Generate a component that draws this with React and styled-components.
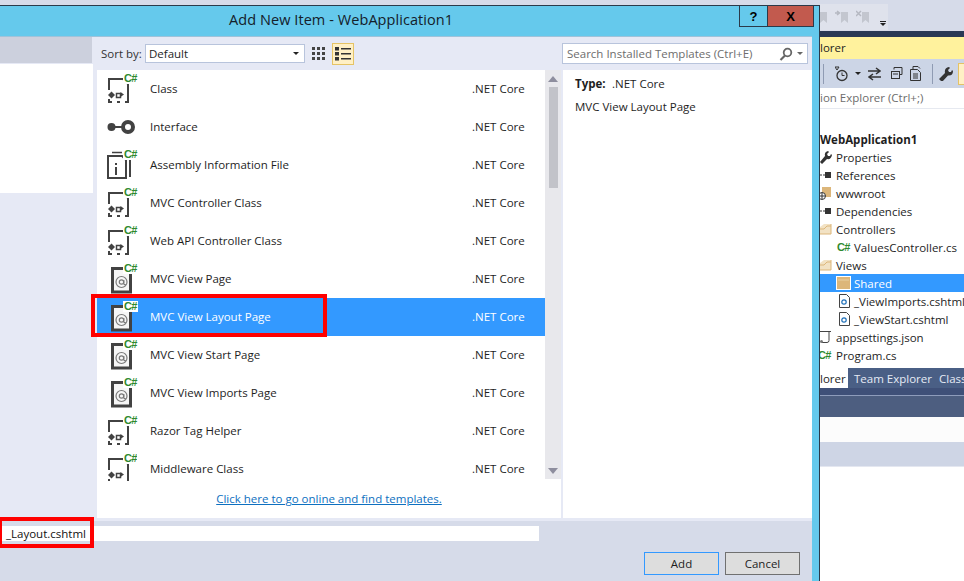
import React from 'react';
import styled, { createGlobalStyle } from 'styled-components';

const GlobalStyle = createGlobalStyle`
  html, body { margin: 0; padding: 0; background: #d6dbe9; }
  body { font-family: "Open Sans", "Noto Sans", "Liberation Sans", sans-serif; font-size: 11.5px; color: #1e1e1e; }
  * { box-sizing: border-box; }
`;

const templates = [
  { name: 'Class', icon: 'class' },
  { name: 'Interface', icon: 'interface' },
  { name: 'Assembly Information File', icon: 'info' },
  { name: 'MVC Controller Class', icon: 'class' },
  { name: 'Web API Controller Class', icon: 'class' },
  { name: 'MVC View Page', icon: 'razor' },
  { name: 'MVC View Layout Page', icon: 'razor', selected: true },
  { name: 'MVC View Start Page', icon: 'razor' },
  { name: 'MVC View Imports Page', icon: 'razor' },
  { name: 'Razor Tag Helper', icon: 'class' },
  { name: 'Middleware Class', icon: 'class' },
];

const treeRows = [
  { label: 'WebApplication1', bold: true },
  { label: 'Properties', icon: 'wrench' },
  { label: 'References', icon: 'refs' },
  { label: 'wwwroot', icon: 'globe' },
  { label: 'Dependencies', icon: 'refs' },
  { label: 'Controllers', icon: 'folder' },
  { label: 'ValuesController.cs', icon: 'cs', nested: true },
  { label: 'Views', icon: 'folder' },
  { label: 'Shared', icon: 'openFolder', nested: true, selected: true },
  { label: '_ViewImports.cshtml', icon: 'page', nested: true },
  { label: '_ViewStart.cshtml', icon: 'page', nested: true },
  { label: 'appsettings.json', icon: 'json' },
  { label: 'Program.cs', icon: 'cs' },
];

const Page = styled.div`
  width: 964px;
  height: 581px;
  display: flex;
  overflow: hidden;
  background: #d6dbe9;
`;

const Dialog = styled.div`
  position: relative;
  width: 820px;
  height: 576px;
  margin-top: 5px;
  display: flex;
  flex-direction: column;
  background: #65c9ec;
  border-top: 1px solid #2b3a4a;
  border-right: 1px solid #2b3a4a;
`;

const TitleBar = styled.div`
  height: 30px;
  padding: 4px 0 0 229px;
  font-size: 14.5px;
  letter-spacing: 0.07px;
  line-height: 20px;
  color: #14202a;
`;

const WindowButtons = styled.div`
  position: absolute;
  top: 0;
  left: 739px;
  display: flex;
  height: 21px;
  border: 1px solid #2b3a4a;
  border-top: 0;
`;

const WindowButton = styled.div`
  width: ${p => p.$w}px;
  display: flex;
  align-items: center;
  justify-content: center;
  background: ${p => p.$bg};
  font: bold 13px "Liberation Sans", sans-serif;
  color: #000;
  & + & { border-left: 1px solid #2b3a4a; }
`;

const DialogBody = styled.div`
  flex: 1;
  margin-right: 7px;
  display: flex;
  flex-direction: column;
  background: #e6e9f5;
  border-top: 1px solid #9fc3da;
`;

const Main = styled.div`
  height: 481px;
  display: grid;
  grid-template-columns: 97px 466px 249px;
  grid-template-rows: 33px 1fr;
`;

const LeftColumn = styled.div`
  grid-row: 1 / 3;
`;

const LeftHeader = styled.div`
  width: 92px;
  height: 26px;
  background: #ccd0dd;
`;

const LeftTree = styled.div`
  width: 93px;
  height: 129px;
  margin-top: 1px;
  background: #fff;
`;

const Toolbar = styled.div`
  display: flex;
  align-items: center;
  padding: 0 0 0 4px;
`;

const SortLabel = styled.span`
  width: 44px;
  color: #333;
`;

const SelectBox = styled.div`
  width: 160px;
  height: 19px;
  padding: 0 3px;
  display: flex;
  align-items: center;
  justify-content: space-between;
  background: #fff;
  border: 1px solid #b8c4dc;
  line-height: 17px;
`;

const Caret = styled.span`
  width: 0;
  height: 0;
  margin: ${p => p.$margin || '0 2px'};
  border-left: 3px solid transparent;
  border-right: 3px solid transparent;
  border-top: 3px solid ${p => p.$color || '#222'};
`;

const ViewButton = styled.div`
  width: 22px;
  height: 22px;
  margin-left: ${p => p.$gap}px;
  display: flex;
  align-items: center;
  justify-content: center;
  background: ${p => (p.$active ? '#fff0c5' : 'transparent')};
  border: 1px solid ${p => (p.$active ? '#e5c365' : 'transparent')};
`;

const SearchCell = styled.div`
  padding: 0 4px 0 0;
  margin-left: -1px;
  display: flex;
  align-items: center;
`;

const SearchBox = styled.div`
  width: 246px;
  height: 21px;
  padding: 0 4px;
  display: flex;
  align-items: center;
  justify-content: space-between;
  background: #fff;
  border: 1px solid #b8c4dc;
  color: #6d6d6d;
`;

const SearchTools = styled.div`
  display: flex;
  align-items: center;
  gap: 4px;
`;

const CenterPane = styled.div`
  display: flex;
  flex-direction: column;
  min-height: 0;
`;

const ListArea = styled.div`
  height: 409px;
  width: 464px;
  display: flex;
  background: #fff;
`;

const List = styled.div`
  width: 448px;
  height: 409px;
`;

const Row = styled.div`
  position: relative;
  height: ${p => (p.$clip ? 31 : 38)}px;
  padding-left: 8px;
  display: flex;
  align-items: ${p => (p.$clip ? 'flex-start' : 'center')};
  background: ${p => (p.$selected ? '#3399ff' : 'transparent')};
  color: ${p => (p.$selected ? '#fff' : '#1e1e1e')};
`;

const IconSlot = styled.div`
  position: relative;
  width: 32px;
  height: 32px;
  margin-top: ${p => (p.$clip ? 3 : 0)}px;
  flex: none;
  overflow: ${p => (p.$clip ? 'hidden' : 'visible')};
  max-height: ${p => (p.$clip ? 28 : 32)}px;
`;

const Badge = styled.span`
  position: absolute;
  top: 0;
  left: 18px;
  padding: 1px 1px 1px 1px;
  font: bold 11px/9px "Liberation Sans", sans-serif;
  color: #2f8a2f;
  background: ${p => (p.$selected ? '#fff' : p.$plain ? 'transparent' : '#fff')};
  letter-spacing: -0.6px;
`;

const RowName = styled.span`
  margin-left: 13px;
  flex: 1;
  line-height: ${p => (p.$clip ? 38 : 16)}px;
`;

const RowType = styled.span`
  width: 73px;
  line-height: ${p => (p.$clip ? 38 : 16)}px;
`;

const RedBox = styled.div`
  position: absolute;
  pointer-events: none;
  border: 4px solid #ff0000;
  left: ${p => p.$left}px;
  top: ${p => p.$top}px;
  width: ${p => p.$w}px;
  height: ${p => p.$h}px;
`;

const Scrollbar = styled.div`
  width: 16px;
  height: 409px;
  display: flex;
  flex-direction: column;
  align-items: center;
  background: #e8e8ec;
`;

const ArrowCell = styled.div`
  height: 17px;
  display: flex;
  align-items: center;
  justify-content: center;
`;

const Thumb = styled.div`
  width: 9px;
  height: 101px;
  background: #c2c3c9;
`;

const ScrollSpace = styled.div`
  flex: 1;
`;

const LinkBar = styled.div`
  width: 464px;
  flex: 1;
  display: flex;
  align-items: center;
  justify-content: center;
  background: #fff;
`;

const OnlineLink = styled.a`
  color: #0e70c0;
  text-decoration: underline;
`;

const Details = styled.div`
  padding: 5px 12px;
  background: #fff;
`;

const DetailLine = styled.div`
  display: flex;
  height: 23px;
  line-height: 18px;
`;

const DetailKey = styled.span`
  width: 37px;
  font-weight: 700;
`;

const Bottom = styled.div`
  position: relative;
  flex: 1;
  background: #d6dbe9;
  border-top: 3px solid #e6e9f5;
  padding-top: 5px;
`;

const NameInput = styled.div`
  width: 539px;
  height: 15px;
  padding-left: 6px;
  background: #fff;
  line-height: 15px;
  color: #111;
`;

const ButtonRow = styled.div`
  margin-top: 11px;
  padding-right: 12px;
  display: flex;
  justify-content: flex-end;
  gap: 6px;
`;

const Button = styled.div`
  width: 75px;
  height: 23px;
  display: flex;
  align-items: center;
  justify-content: center;
  background: #dddddd;
  border: 1px solid ${p => (p.$primary ? '#3399ff' : '#707070')};
`;

const Side = styled.div`
  width: 144px;
  height: 581px;
  display: flex;
  flex-direction: column;
  overflow: hidden;
  white-space: nowrap;
`;

const TopTools = styled.div`
  height: 31px;
  padding-top: 4px;
  display: flex;
`;

const FadedTools = styled.div`
  width: 68px;
  height: 26px;
  display: flex;
  align-items: center;
  gap: 6px;
  background: #dfe2ec;
  overflow: hidden;

  svg:first-child { margin-left: -6px; }
`;

const Overflow = styled.div`
  width: 12px;
  display: flex;
  flex-direction: column;
  align-items: center;
  justify-content: flex-end;
  margin-left: -11px;
  padding-bottom: 5px;
`;

const OverflowBar = styled.span`
  width: 6px;
  height: 1px;
  margin-bottom: 1px;
  background: #222;
`;

const NavyStrip = styled.div`
  height: 6px;
  flex: none;
  background: #293955;
`;

const PaneTitle = styled.div`
  height: 22px;
  flex: none;
  line-height: 22px;
  background: #fff29d;
`;

const PaneToolbar = styled.div`
  height: 29px;
  flex: none;
  display: flex;
  align-items: center;
  padding-left: 3px;
  background: #ccd5e6;
`;

const ToolSep = styled.span`
  width: 1px;
  height: 20px;
  margin: ${p => p.$margin};
  background: #8f9bb3;
`;

const ToolIcon = styled.span`
  display: inline-flex;
  margin-left: ${p => p.$gap || 0}px;
`;

const YellowTool = styled.span`
  width: 8px;
  height: 22px;
  margin-left: 5px;
  background: #fff0c5;
  border: 1px solid #e5c365;
  border-right: 0;
`;

const PaneSearch = styled.div`
  height: 21px;
  flex: none;
  line-height: 20px;
  color: #6d6d6d;
  background: #fff;
  border-bottom: 1px solid #e6e9f0;
`;

const Tree = styled.div`
  height: 259px;
  flex: none;
  padding-top: 21px;
  background: #fff;
  overflow: hidden;
`;

const TreeRow = styled.div`
  height: 18px;
  padding-left: ${p => (p.$nested ? 16 : 0)}px;
  display: flex;
  align-items: center;
  font-weight: ${p => (p.$bold ? 700 : 400)};
  background: ${p => (p.$selected ? '#3399ff' : 'transparent')};
  color: ${p => (p.$selected ? '#fff' : '#1e1e1e')};
`;

const TreeLabel = styled.span`
  padding-top: 2px;
  line-height: 18px;
`;

const TreeIcon = styled.span`
  width: ${p => (p.$nested ? 18 : 16)}px;
  height: 16px;
  flex: none;
  display: flex;
`;

const CsText = styled.span`
  margin-left: ${p => (p.$nested ? 1 : -2)}px;
  font: bold 11px/17px "Liberation Sans", sans-serif;
  color: #2f8a2f;
  letter-spacing: -0.6px;
`;

const TabStrip = styled.div`
  height: 20px;
  flex: none;
  display: flex;
  background: #4a5f85;
`;

const Tab = styled.div`
  flex: none;
  width: ${p => p.$w}px;
  padding-left: ${p => p.$pad}px;
  line-height: 22px;
  background: ${p => (p.$active ? '#fff' : 'transparent')};
  color: ${p => (p.$active ? '#1e1e1e' : '#e6ebf5')};
`;

const TabFoot = styled.div`
  height: 8px;
  flex: none;
  background: #3f5078;
  border-bottom: 1px solid #8e9cbb;
`;

const NavyBar = styled.div`
  height: 21px;
  flex: none;
  background: #4d5e80;
`;

const PaleBar = styled.div`
  height: 25px;
  flex: none;
  background: #fcfcfc;
`;

const GreyBar = styled.div`
  height: 25px;
  flex: none;
  background: #ced5e5;
  border-bottom: 1px solid #e4e7f0;
`;

const Rest = styled.div`
  flex: 1;
  background: #fff;
`;

const dark = '#424242';

const FileIcon = ({ type }) => {
  if (type === 'interface') {
    return (
      <svg width="32" height="32" viewBox="0 0 32 32">
        <circle cx="6.5" cy="16" r="4" fill={dark} />
        <path d="M6 16h12" stroke={dark} strokeWidth="2" />
        <circle cx="23" cy="16" r="5" fill="none" stroke={dark} strokeWidth="4" />
      </svg>
    );
  }
  if (type === 'info') {
    return (
      <svg width="32" height="32" viewBox="0 0 32 32" fill="none">
        <path d="M7 3.5h10" stroke={dark} strokeWidth="1.5" />
        <path d="M3 29V7h14l4 4v18z" stroke={dark} strokeWidth="2" />
        <path d="M25 11v17" stroke={dark} strokeWidth="2" />
        <rect x="10" y="14" width="2" height="2" fill={dark} />
        <rect x="10" y="18" width="2" height="8" fill={dark} />
      </svg>
    );
  }
  if (type === 'razor') {
    return (
      <svg width="32" height="32" viewBox="0 0 32 32" fill="none">
        <path d="M7.500 29V5.500H21l4.500 4.500V29z" stroke={dark} strokeWidth="3" fill="#f6f6f6" />
        <circle cx="16.500" cy="19" r="5.500" stroke="#7a7a7a" strokeWidth="1.200" />
        <circle cx="16.500" cy="19" r="2.200" stroke="#7a7a7a" strokeWidth="1.200" />
        <path d="M18.800 17v3.500q0 1.500 2 1" stroke="#7a7a7a" strokeWidth="1.200" />
      </svg>
    );
  }
  return (
    <svg width="32" height="32" viewBox="0 0 32 32" fill="none">
      <path d="M4 17V6h14l5 5v18h-3" stroke={dark} strokeWidth="2" />
      <path d="M4 26v3h3" stroke={dark} strokeWidth="2" />
      <path d="M3 22l3.500-3.500L10 22l-3.500 3.500z" fill={dark} />
      <path d="M11.500 20.500h4v4h-4z" stroke={dark} strokeWidth="1.500" />
      <path d="M15.500 19l3.500 2.500-3.500 2.500z" fill={dark} />
      <path d="M12 29h3" stroke={dark} strokeWidth="2" />
    </svg>
  );
};

const TreeGlyph = ({ type, nested }) => {
  switch (type) {
    case 'wrench':
      return (
        <svg width="16" height="16" viewBox="0 0 16 16">
          <path d="M0 13l5-6q-1-4 3-5l1 1-2 2 1 2 2 0 1-2 1 1q-1 5-5 4l-5 5z" fill="#333" />
        </svg>
      );
    case 'refs':
      return (
        <svg width="16" height="16" viewBox="0 0 16 16">
          <path d="M0 8h2M3 8h2" stroke="#333" />
          <rect x="5" y="5" width="6" height="6" fill="#333" />
        </svg>
      );
    case 'globe':
      return (
        <svg width="16" height="16" viewBox="0 0 16 16" fill="none">
          <path d="M2 2h9v10H2z" fill="#dcb67a" />
          <circle cx="2" cy="11" r="3.500" fill="#fff" stroke="#333" />
          <path d="M-1 11h6M2 8v6" stroke="#333" />
        </svg>
      );
    case 'folder':
      return (
        <svg width="16" height="16" viewBox="0 0 16 16" fill="none">
          <path d="M0 13V6l4-3h7v10z" fill="#f2e2c4" />
          <path d="M0 13h11V3" stroke="#dcb67a" />
          <path d="M0 8h4l3-3h4" stroke="#dcb67a" />
        </svg>
      );
    case 'openFolder':
      return (
        <svg width="18" height="16" viewBox="0 0 18 16" fill="none">
          <rect x="0.500" y="1.500" width="14" height="13" fill="#dcb67a" stroke="#fff" />
          <path d="M2 5h11" stroke="#e8cfa2" />
        </svg>
      );
    case 'page':
      return (
        <svg width="18" height="16" viewBox="-2 0 18 16" fill="none">
          <path d="M1.500 1.500h7l3 3v10h-10z" fill="#fff" stroke="#444" />
          <circle cx="6" cy="9" r="2.200" stroke="#1e6fb8" strokeWidth="1.200" />
        </svg>
      );
    case 'json':
      return (
        <svg width="16" height="16" viewBox="0 0 16 16" fill="none">
          <path d="M0 2.500h9v9q0 2-2 2h-5" stroke="#444" />
          <path d="M9 2.500h2" stroke="#444" />
          <circle cx="1.500" cy="12.500" r="1.500" fill="#777" />
        </svg>
      );
    case 'cs':
      return <CsText $nested={nested}>C#</CsText>;
    default:
      return null;
  }
};

const Bookmark = ({ mark }) => (
  <svg width="15" height="15" viewBox="0 0 15 15">
    <path d="M6 2h7v11l-3.500-3L6 13z" fill="#c3c6cf" />
    {mark === 'arrow' && <path d="M0 3l4 0M2 1l2.500 2L2 5" stroke="#b5b8c1" fill="none" strokeWidth="1.500" />}
    {mark === 'cross' && <path d="M0 1l5 5M5 1L0 6" stroke="#b5b8c1" strokeWidth="1.500" />}
  </svg>
);

const App = () => (
  <Page>
    <GlobalStyle />
    <Dialog>
      <TitleBar>Add New Item - WebApplication1</TitleBar>
      <WindowButtons>
        <WindowButton $w={27} $bg="#65c9ec">?</WindowButton>
        <WindowButton $w={46} $bg="#c25a4e">X</WindowButton>
      </WindowButtons>
      <DialogBody>
        <Main>
          <LeftColumn>
            <LeftHeader />
            <LeftTree />
          </LeftColumn>
          <Toolbar>
            <SortLabel>Sort by:</SortLabel>
            <SelectBox>
              Default
              <Caret />
            </SelectBox>
            <ViewButton $gap={3}>
              <svg width="14" height="14" viewBox="0 0 14 14" fill="#444">
                {[0, 5, 10].map(x => [0, 5, 10].map(y => (
                  <rect key={`${x}-${y}`} x={x} y={y} width="3" height="3" />
                )))}
              </svg>
            </ViewButton>
            <ViewButton $gap={2} $active>
              <svg width="16" height="14" viewBox="0 0 16 14" fill="#333">
                {[0, 5, 10].map(y => (
                  <g key={y}>
                    <rect x="0" y={y} width="4" height="3.500" />
                    <rect x="6" y={y + 1} width="10" height="1.500" />
                  </g>
                ))}
              </svg>
            </ViewButton>
          </Toolbar>
          <SearchCell>
            <SearchBox>
              Search Installed Templates (Ctrl+E)
              <SearchTools>
                <svg width="14" height="14" viewBox="0 0 14 14" fill="none">
                  <circle cx="8.500" cy="5.500" r="3.800" stroke="#666" strokeWidth="1.800" />
                  <path d="M6 8.500l-4.500 4.500" stroke="#666" strokeWidth="2.200" />
                </svg>
                <Caret $color="#666" $margin="0" />
              </SearchTools>
            </SearchBox>
          </SearchCell>
          <CenterPane>
            <ListArea>
              <List>
                {templates.map((t, i) => {
                  const clip = i === templates.length - 1;
                  return (
                    <Row key={t.name} $selected={t.selected} $clip={clip}>
                      <IconSlot $clip={clip}>
                        <FileIcon type={t.icon} />
                        {t.icon !== 'interface' && <Badge $selected={t.selected}>C#</Badge>}
                      </IconSlot>
                      <RowName $clip={clip}>{t.name}</RowName>
                      <RowType $clip={clip}>.NET Core</RowType>
                      {t.selected && <RedBox $left={-6} $top={-4} $w={236} $h={43} />}
                    </Row>
                  );
                })}
              </List>
              <Scrollbar>
                <ArrowCell>
                  <svg width="10" height="6" viewBox="0 0 10 6"><path d="M0 6l5-6 5 6z" fill="#8e8e9e" /></svg>
                </ArrowCell>
                <Thumb />
                <ScrollSpace />
                <ArrowCell>
                  <svg width="10" height="6" viewBox="0 0 10 6"><path d="M0 0l5 6 5-6z" fill="#8e8e9e" /></svg>
                </ArrowCell>
              </Scrollbar>
            </ListArea>
            <LinkBar>
              <OnlineLink>Click here to go online and find templates.</OnlineLink>
            </LinkBar>
          </CenterPane>
          <Details>
            <DetailLine>
              <DetailKey>Type:</DetailKey>
              .NET Core
            </DetailLine>
            <DetailLine>MVC View Layout Page</DetailLine>
          </Details>
        </Main>
        <Bottom>
          <NameInput>_Layout.cshtml</NameInput>
          <RedBox $left={-2} $top={-4} $w={96} $h={31} />
          <ButtonRow>
            <Button $primary>Add</Button>
            <Button>Cancel</Button>
          </ButtonRow>
        </Bottom>
      </DialogBody>
    </Dialog>
    <Side>
      <TopTools>
        <FadedTools>
          <Bookmark />
          <Bookmark mark="arrow" />
          <Bookmark mark="cross" />
        </FadedTools>
        <Overflow>
          <OverflowBar />
          <Caret $margin="0" />
        </Overflow>
      </TopTools>
      <NavyStrip />
      <PaneTitle>lorer</PaneTitle>
      <PaneToolbar>
        <ToolSep $margin="0 11px 0 0" />
        <ToolIcon>
          <svg width="14" height="16" viewBox="0 0 14 16" fill="none">
            <circle cx="7" cy="9.500" r="5" stroke="#333" strokeWidth="1.300" />
            <path d="M7 6.500v3h2.500M0 1h4L2 4z" stroke="#333" />
          </svg>
        </ToolIcon>
        <Caret $margin="0 0 0 6px" />
        <ToolIcon $gap={7}>
          <svg width="13" height="14" viewBox="0 0 13 14" fill="none" stroke="#333" strokeWidth="1.500">
            <path d="M0 4h12M8 1l4 3-4 3M13 10H1M5 7l-4 3 4 3" />
          </svg>
        </ToolIcon>
        <ToolIcon $gap={9}>
          <svg width="13" height="13" viewBox="0 0 13 13" fill="none" stroke="#333">
            <path d="M4 2.500V.500h8v7h-2" />
            <rect x="1.500" y="4.500" width="8" height="7" />
            <path d="M3 7h5" />
          </svg>
        </ToolIcon>
        <ToolIcon $gap={7}>
          <svg width="15" height="15" viewBox="0 0 15 15" fill="none" stroke="#333">
            <path d="M3 4V.500h5l2 2M.500 3.500h7l3 3v8h-10zM3 8h5M3 10h5M3 12h5" />
          </svg>
        </ToolIcon>
        <ToolSep $margin="0 7px" />
        <ToolIcon>
          <svg width="14" height="14" viewBox="0 0 14 14"><path d="M0 12l6-6q-1-5 4-6l1 1-2 2 1 2 2 0 1-2 1 1q0 5-5 4.500l-6 6.500z" fill="#333" /></svg>
        </ToolIcon>
        <YellowTool />
      </PaneToolbar>
      <PaneSearch>ion Explorer (Ctrl+;)</PaneSearch>
      <Tree>
        {treeRows.map(r => (
          <TreeRow key={r.label} $nested={r.nested} $bold={r.bold} $selected={r.selected}>
            {r.icon && (
              <TreeIcon $nested={r.nested}>
                <TreeGlyph type={r.icon} nested={r.nested} />
              </TreeIcon>
            )}
            <TreeLabel>{r.label}</TreeLabel>
          </TreeRow>
        ))}
      </Tree>
      <TabStrip>
        <Tab $active $w={28} $pad={0}>lorer</Tab>
        <Tab $w={91} $pad={6}>Team Explorer</Tab>
        <Tab $w={40} $pad={0}>Class</Tab>
      </TabStrip>
      <TabFoot />
      <NavyBar />
      <PaleBar />
      <GreyBar />
      <Rest />
    </Side>
  </Page>
);

export default App;
